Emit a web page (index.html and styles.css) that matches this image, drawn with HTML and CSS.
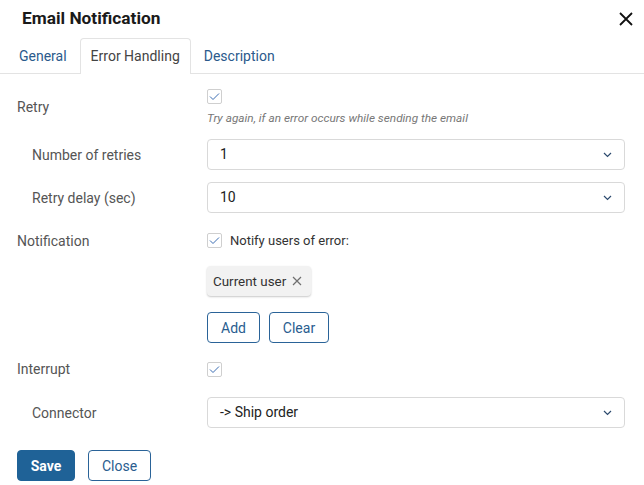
FILE: index.html
```html
<!DOCTYPE html>
<html>
<head>
  <title>Email Notification</title>
  <link rel="stylesheet" href="styles.css">
</head>
<body>
  <div class="dialog">
    <div class="header">
      <div class="title">Email Notification</div>
      <svg class="close-x" width="14" height="14" viewBox="0 0 14 14"><path d="M1 1L13 13M13 1L1 13" stroke="#111" stroke-width="1.8" fill="none"/></svg>
    </div>
    <div class="tabs">
      <div class="tab">General</div>
      <div class="tab active">Error Handling</div>
      <div class="tab">Description</div>
    </div>

    <div class="form">
      <div class="row row-retry center">
        <div class="label">Retry</div>
        <div class="control">
          <span class="check"><svg width="11" height="9" viewBox="0 0 11 9"><path d="M1 4.5L4 7.5L10 1.5" stroke="#3b6db3" stroke-width="1" fill="none"/></svg></span>
          <div class="hint">Try again, if an error occurs while sending the email</div>
        </div>
      </div>

      <div class="row row-sub1 center">
        <div class="label sub">Number of retries</div>
        <div class="control">
          <div class="select">1<svg class="chev" width="9" height="6" viewBox="0 0 9 6"><path d="M1 1L4.5 4.5L8 1" stroke="#2c4a6e" stroke-width="1.2" fill="none"/></svg></div>
        </div>
      </div>

      <div class="row row-sub2 center">
        <div class="label sub">Retry delay (sec)</div>
        <div class="control">
          <div class="select">10<svg class="chev" width="9" height="6" viewBox="0 0 9 6"><path d="M1 1L4.5 4.5L8 1" stroke="#2c4a6e" stroke-width="1.2" fill="none"/></svg></div>
        </div>
      </div>

      <div class="row row-notify">
        <div class="label">Notification</div>
        <div class="control">
          <div class="check-line">
            <span class="check"><svg width="11" height="9" viewBox="0 0 11 9"><path d="M1 4.5L4 7.5L10 1.5" stroke="#3b6db3" stroke-width="1" fill="none"/></svg></span>
            <span>Notify users of error:</span>
          </div>
          <div class="tags">
            <span class="tag">Current user <svg class="tag-x" width="10" height="10" viewBox="0 0 10 10"><path d="M1 1L9 9M9 1L1 9" stroke="#6f6f6f" stroke-width="1.2" fill="none"/></svg></span>
          </div>
          <div class="btns">
            <button class="btn add-btn">Add</button>
            <button class="btn clear-btn">Clear</button>
          </div>
        </div>
      </div>

      <div class="row row-interrupt center">
        <div class="label">Interrupt</div>
        <div class="control">
          <span class="check"><svg width="11" height="9" viewBox="0 0 11 9"><path d="M1 4.5L4 7.5L10 1.5" stroke="#3b6db3" stroke-width="1" fill="none"/></svg></span>
        </div>
      </div>

      <div class="row row-connector center">
        <div class="label sub">Connector</div>
        <div class="control">
          <div class="select">-&gt; Ship order<svg class="chev" width="9" height="6" viewBox="0 0 9 6"><path d="M1 1L4.5 4.5L8 1" stroke="#2c4a6e" stroke-width="1.2" fill="none"/></svg></div>
        </div>
      </div>

      <div class="footer">
        <button class="btn primary">Save</button>
        <button class="btn close-btn">Close</button>
      </div>
    </div>
  </div>
</body>
</html>
```

FILE: styles.css
```css
body { margin: 0; font-family: Roboto, "Liberation Sans", sans-serif; background: #fff; color: #333; }
.dialog { width: 644px; height: 485px; overflow: hidden; }
.header { display: flex; justify-content: space-between; align-items: center; height: 36px; padding: 0 11px 0 22px; }
.title { font-size: 17.3px; font-weight: 700; color: #1a1a1a; }
.close-x { display: block; margin-top: 2px; }
.tabs { display: flex; padding: 2px 0 0 8px; border-bottom: 1px solid #e3e3e3; height: 35px; }
.tab { padding: 0 10px; margin-right: 2px; font-size: 14px; color: #2b5a8c; line-height: 34px; border: 1px solid transparent; border-bottom: none; }
.tab.active { color: #444; border-color: #e3e3e3; border-radius: 4px 4px 0 0; background: #fff; height: 35px; }
.form { padding: 0 19px 0 17px; }
.row { display: flex; }
.row.center { align-items: center; }
.label { width: 190px; flex: none; font-size: 14px; line-height: 18px; color: #555; }
.label.sub { padding-left: 15px; width: 175px; }
.control { flex: 1; display: flex; flex-direction: column; align-items: flex-start; }
.row-retry { margin-top: 15px; }
.row-sub1 { margin-top: 14px; }
.row-sub2 { margin-top: 12px; }
.row-notify { margin-top: 19px; }
.row-interrupt { margin-top: 17px; }
.row-connector { margin-top: 19px; }
.check { display: flex; align-items: center; justify-content: center; width: 15px; height: 15px; box-sizing: border-box; border: 1px solid #cfcfcf; border-radius: 2px; background: #fff; flex: none; }
.hint { margin-top: 7px; font-size: 11.8px; font-style: italic; color: #777; line-height: 14px; }
.select { align-self: stretch; position: relative; height: 31px; box-sizing: border-box; border: 1px solid #d9d9d9; border-radius: 4px; padding-left: 12px; font-size: 14px; line-height: 29px; color: #222; }
.chev { position: absolute; right: 12px; top: 12px; }
.check-line { display: flex; align-items: center; gap: 8px; font-size: 13px; color: #333; height: 17px; }
.tags { margin-top: 17px; }
.tag { display: inline-flex; align-items: center; height: 30px; padding: 0 9px 0 6px; background: #f2f2f2; border-radius: 4px; box-shadow: 0 1px 2px rgba(0, 0, 0, 0.22); font-size: 13.4px; color: #333; }
.tag-x { margin-left: 6px; display: block; }
.btns { display: flex; gap: 9px; margin-top: 16px; }
.btn { height: 31px; box-sizing: border-box; border: 1px solid #2a6398; border-radius: 4px; background: #fff; color: #2a5d8f; font-family: Roboto, "Liberation Sans", sans-serif; font-size: 14px; padding: 0; cursor: pointer; }
.add-btn { width: 53px; }
.clear-btn { width: 60px; }
.footer { display: flex; gap: 13px; margin-top: 22px; }
.btn.primary { background: #1f6297; border-color: #1f6297; color: #fff; font-weight: 700; width: 58px; }
.btn.close-btn { width: 63px; }
```
